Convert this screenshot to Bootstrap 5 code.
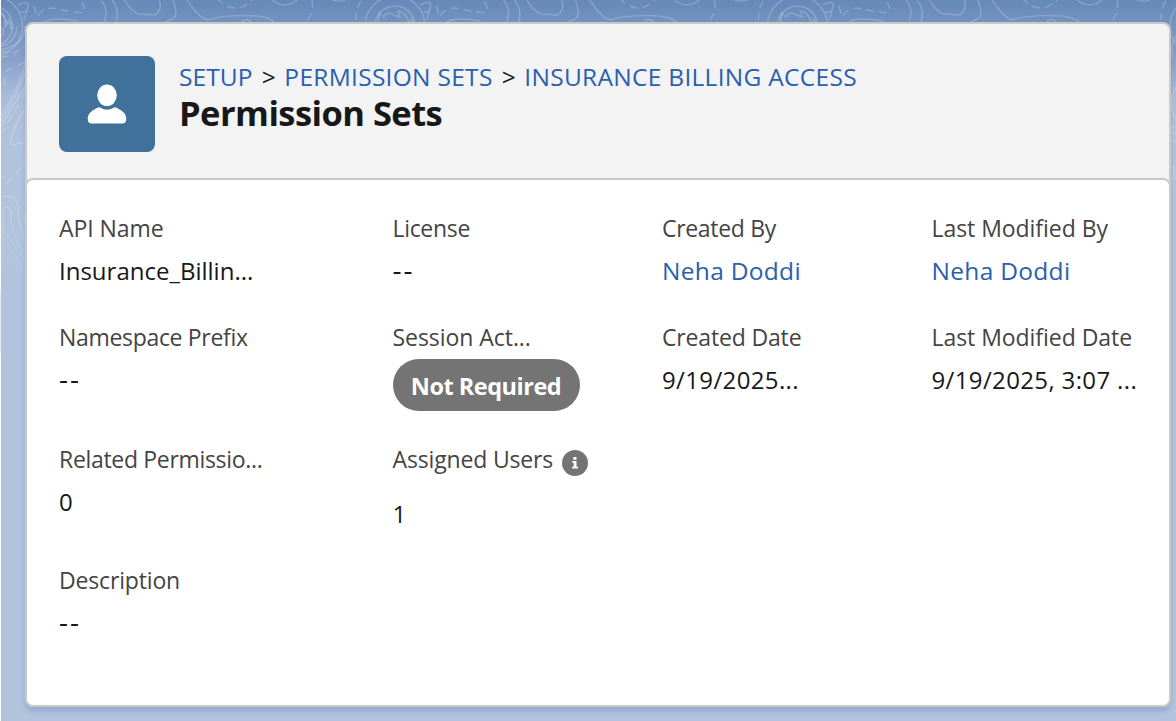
<!DOCTYPE html>
<html lang="en">
<head>
<meta charset="utf-8">
<meta name="viewport" content="width=device-width, initial-scale=1">
<title>Permission Sets</title>
<link href="https://cdn.jsdelivr.net/npm/bootstrap@5.3.0/dist/css/bootstrap.min.css" rel="stylesheet">
<style>
html,body{height:100%}
body{font-family:"Open Sans","Noto Sans",sans-serif;background:linear-gradient(#fff 290px,#ebebeb 290px,#ebebeb 353px,#fff 353px);overflow:hidden;color:#181818;line-height:1.5}
.stage{position:relative;height:721px;margin-left:1px;padding:22px 5px 0 24px;background:linear-gradient(#6689b9 0,#7493bf 24px,#88a2cb 60px,#a9bbda 95px,#b1c1dd 125px,#b1c3dd 160px,#b1c3dd 100%)}
/* contour-line backdrop behind the record card */
.topo{position:absolute;left:-1px;top:0;z-index:0}
.sheet{position:relative;z-index:1;height:685px;border:2px solid #c9c9c9;border-radius:8px;background:#f3f3f3;box-shadow:0 4px 5px rgba(90,105,170,.28)}
.head-band{height:154px;padding:32px}
.avatar{width:96px;height:96px;border-radius:8px;background:#40719b;flex:none}
.crumbs{font-size:24.5px;line-height:32px;white-space:nowrap;margin-top:5px;letter-spacing:.29px}
.crumbs i{font-style:normal;letter-spacing:0;margin:0 8.700px 0 9px}
.crumbs a:first-child{letter-spacing:.1px}
a{color:#2a5fae;text-decoration:none}
h1{font-size:34.5px;font-weight:700;line-height:40px;margin:0;letter-spacing:-.55px}
.detail{height:529px;margin:0 -2px -2px;border:2px solid #c9c9c9;border-radius:8px;background:#fff;padding:32px;display:grid;grid-template-columns:333.5px 269.5px 269.5px 1fr;grid-template-rows:109px 122px 121px auto}
.lbl{font-size:23px;line-height:32px;color:#444;white-space:nowrap;letter-spacing:-.16px}
.lbl-plain{letter-spacing:-.05px}
.lbl-tight{letter-spacing:-.32px}
.val{font-size:24px;line-height:32px;margin-top:11px;white-space:nowrap}
.val-wide{letter-spacing:.36px}
.val-link{font-size:24.5px;letter-spacing:.3px}
.val-none{font-size:28px;letter-spacing:2px;margin-top:9px}
.val-low{margin-top:23px}
.pill{width:187px;height:52px;font-size:23.5px;font-weight:700;letter-spacing:-.5px;background:#747474;color:#fff;margin-top:6px;padding-top:3px}
.info{margin:7px 0 -1px 9px;flex:none}
</style>
</head>
<body>
<main class="stage">
<svg class="topo" width="1176" height="721" fill="none" stroke="#fff" stroke-opacity=".2" stroke-width="1.5" aria-hidden="true">
<defs>
<g id="contours">
<path stroke-dasharray="8 5" d="M34 6L37 17Q42 8 52 8L68 11 82 13Q88 8 80 0M217 -2Q235 17 252 0M312 0Q315 17 302 23M361 1Q355 10 356 20"/>
<path d="M101 0Q109 9 104 23M112 0Q120 10 116 23M124 -1Q131 12 139 14L155 15Q163 9 159 0M173 0Q179 17 172 19L164 23M187 0Q200 19 208 20C220 15 255 14 267 18Q272 20 275 23M241 23Q246 16 252 23M272 0Q284 10 297 0M332 0Q338 2 345 0M43 23Q50 16 78 21M18 5Q29 -1 28 7L24 20M20 12Q25 13 27 10M378 24L379 13 384 17Q387 10 394 15L400 17 398 11Q406 12 409 23L412 19 414 25"/>
<circle cx="395" cy="26" r="20"/><circle cx="395" cy="26" r="30"/>
</g>
<linearGradient id="g" x2="0" y2="1"><stop stop-color="#fff"/><stop offset="1" stop-color="#fff" stop-opacity="0"/></linearGradient>
</defs>
<svg x="1" width="1175" height="721" viewBox="1 0 1175 721">
<use href="#contours" x="-402.5"/><use href="#contours"/><use href="#contours" x="402.5"/><use href="#contours" x="805"/>
<path d="M1 12L5 17 5 27 9 22 11 29 14 26M1 28Q6 31 1 36M1 46Q16 43 17 26M1 50Q26 44 25 26"/>
<path stroke-dasharray="8 6" d="M1 52L14 51M1 57L16 55M12 54L26 46M25 62L6 71 3 92M26 92L2 132M27 155Q18 177 1 187"/>
<path d="M27 57Q20 88 1 116M27 68Q17 97 1 121M27 83Q14 105 1 127M27 107Q17 117 10 143L13 145 27 141"/>
<path d="M1176 36Q1170 44 1173 58M1176 87Q1167 103 1176 119M1170 127H1176M1170 133H1176M1170 141H1176M1174 165V180"/>
<g stroke="url(#g)"><path d="M1 197C12 194 18 199 18 210Q18 230 28 244M3 280V212Q6 203 11 211C10 230 16 242 28 258M1 227Q12 243 27 262M1 237Q16 251 27 285M1 247Q12 260 12 288M28 208Q21 216 28 233"/></g>
</svg>
</svg>
<section class="sheet">
<header class="head-band d-flex">
<svg class="avatar" viewBox="0 0 96 96" fill="#fff" aria-hidden="true"><ellipse cx="48" cy="39.3" rx="9.8" ry="10.8"/><path d="M39.600 51.200q1-.2 1.800.5 6.600 4.300 13.200 0 .8-.7 1.800-.5C62.200 53.900 67.300 57 67.300 62.700q0 4.700-3.800 4.700H32.500q-3.800 0-3.800-4.700C28.700 57 33.800 53.900 39.600 51.200z"/></svg>
<div class="ms-4"><nav class="crumbs d-flex"><a href="#">SETUP</a><i>&gt;</i><a href="#">PERMISSION SETS</a><i>&gt;</i><a href="#">INSURANCE BILLING ACCESS</a></nav><h1>Permission Sets</h1></div>
</header>
<div class="detail">
<div><div class="lbl lbl-plain">API Name</div><div class="val">Insurance_Billin...</div></div>
<div><div class="lbl lbl-tight">License</div><div class="val val-none">--</div></div>
<div><div class="lbl lbl-tight">Created By</div><div class="val val-link"><a href="#">Neha Doddi</a></div></div>
<div><div class="lbl lbl-plain">Last Modified By</div><div class="val val-link"><a href="#">Neha Doddi</a></div></div>
<div><div class="lbl lbl-tight">Namespace Prefix</div><div class="val val-none">--</div></div>
<div><div class="lbl lbl-plain">Session Act...</div><div class="pill rounded-pill d-flex align-items-center justify-content-center">Not Required</div></div>
<div><div class="lbl">Created Date</div><div class="val val-wide">9/19/2025...</div></div>
<div><div class="lbl lbl-plain">Last Modified Date</div><div class="val val-wide">9/19/2025, 3:07 ...</div></div>
<div><div class="lbl lbl-tight">Related Permissio...</div><div class="val">0</div></div>
<div><div class="d-flex"><div class="lbl">Assigned Users</div><svg class="info" width="26" height="26" viewBox="0 0 26 26" aria-label="Info"><circle cx="13" cy="13" r="13" fill="#747474"/><path fill="#fff" d="M11.300 7h3.200v2.800h-3.200zM10.300 11h4.200v5.800h1.500v1.700h-5.900v-1.700h1.600v-4.100h-1.400z"/></svg></div><div class="val val-low">1</div></div>
<div></div><div></div>
<div><div class="lbl">Description</div><div class="val val-none">--</div></div>
</div>
</section>
</main>
<script src="https://cdn.jsdelivr.net/npm/bootstrap@5.3.0/dist/js/bootstrap.bundle.min.js"></script>
</body>
</html>
